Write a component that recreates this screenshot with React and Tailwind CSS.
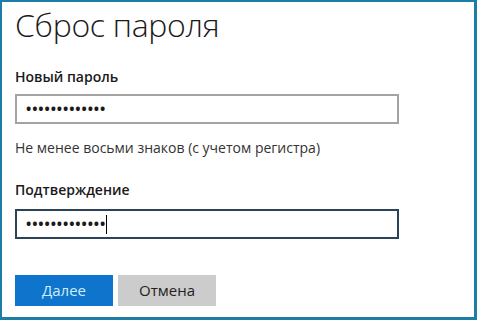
export default function App() {
  return (
    <div className="w-[477px] h-[320px] bg-white border-t-2 border-l-2 border-r-[3px] border-b-[3px] border-[#1c7ea6] pl-[13px] text-[#1a1a1a] overflow-hidden" style={{ fontFamily: '"Open Sans", "Noto Sans", sans-serif' }}>
      <h1 className="text-[32px] font-light leading-[40px] mt-[3px] tracking-[-0.3px]">Сброс пароля</h1>

      <label className="block mt-[22px] text-[14px] font-semibold leading-[20px]">Новый пароль</label>
      <div className="mt-[7px] w-[384px] h-[30px] border-2 border-[#a3a3a3] flex items-center pl-[9px]">
        <span className="text-[14px] font-bold tracking-[0.9px] leading-none">•••••••••••••</span>
      </div>

      <p className="mt-[14px] text-[14px] leading-[20px] text-[#333]">Не менее восьми знаков (с учетом регистра)</p>

      <label className="block mt-[22px] text-[14px] font-semibold leading-[20px]">Подтверждение</label>
      <div className="mt-[9px] w-[384px] h-[30px] border-2 border-[#2b4257] flex items-center pl-[9px]">
        <span className="text-[14px] font-bold tracking-[0.9px] leading-none">•••••••••••••</span>
        <span className="w-px h-[19px] bg-black"></span>
      </div>

      <div className="mt-[36px] flex gap-[5px]">
        <button className="w-[98px] h-[31px] bg-[#0f74cc] text-[#cdeefc] text-[15px]">Далее</button>
        <button className="w-[98px] h-[31px] bg-[#cccccc] text-[#222] text-[15px]">Отмена</button>
      </div>
    </div>
  );
}
